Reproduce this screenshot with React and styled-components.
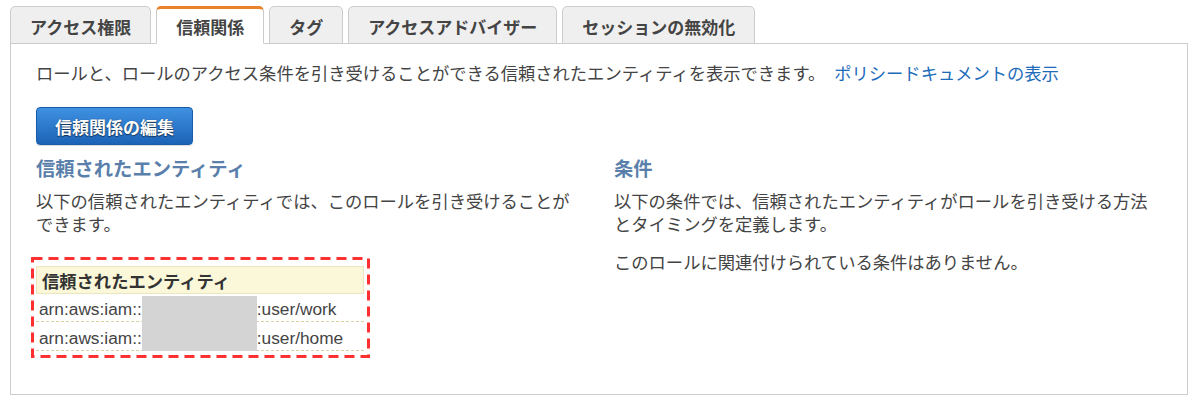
import React from "react";
import styled, { createGlobalStyle } from "styled-components";

const Global = createGlobalStyle`
  html, body { margin: 0; padding: 0; background: #fff; }
  body {
    font-family: "Liberation Sans", "Noto Sans CJK JP", sans-serif;
    color: #444;
  }
`;

const Page = styled.div`
  width: 1178px;
  padding: 6px 0 0 10px;
`;

const TabBar = styled.div`
  display: flex;
  gap: 5px;
  align-items: flex-end;
  position: relative;
  z-index: 1;
  margin-bottom: -1px;
`;

const Tab = styled.div`
  box-sizing: border-box;
  height: 38px;
  display: flex;
  align-items: center;
  padding: 0 19px;
  border: 1px solid #cccccc;
  border-radius: 5px 5px 0 0;
  font-size: 17px;
  font-weight: bold;
  color: #444;
  background: ${(p) => (p.$active ? "#fff" : "#efefef")};
  border-top: ${(p) => (p.$active ? "3px solid #e8832b" : "1px solid #cccccc")};
  border-bottom: ${(p) => (p.$active ? "1px solid #fff" : "1px solid #cccccc")};
  padding-top: ${(p) => (p.$active ? "0" : "2px")};
`;

const Panel = styled.div`
  box-sizing: border-box;
  height: 352px;
  border: 1px solid #cccccc;
  padding: 19px 25px 0 25px;
`;

const Intro = styled.div`
  font-size: 17.3px;
  line-height: 23px;
  color: #444;
`;

const Link = styled.a`
  color: #1d6cba;
  text-decoration: none;
  margin-left: 9px;
`;

const Button = styled.button`
  margin-top: 21px;
  box-sizing: border-box;
  height: 38px;
  padding: 0 18px;
  border: 1px solid #1a5ba9;
  border-radius: 4px;
  background: linear-gradient(#3f91e2, #1c63b6);
  color: #fff;
  font-family: "Liberation Sans", "Noto Sans CJK JP", sans-serif;
  font-size: 17px;
  font-weight: bold;
  text-shadow: 0 1px 1px rgba(0, 0, 0, 0.55), 0 0 1px rgba(0, 0, 0, 0.4);
  box-shadow: 0 1px 1px rgba(0, 0, 0, 0.15);
`;

const Columns = styled.div`
  display: grid;
  grid-template-columns: 1fr 1fr;
  margin-top: 13px;
`;

const Column = styled.div`
  padding: ${(p) => (p.$right ? "0 0 0 15px" : "0 15px 0 0")};
`;

const Heading = styled.div`
  font-size: 19.3px;
  line-height: 24px;
  font-weight: bold;
  color: #5a7fab;
`;

const Para = styled.p`
  margin: ${(p) => p.$mt || "9px"} 0 0 0;
  font-size: 17.3px;
  line-height: 23px;
  color: #444;
`;

const Annotation = styled.div`
  position: relative;
  box-sizing: border-box;
  width: 339px;
  height: 101px;
  margin: 20px 0 0 -5px;
  padding: 9px 6px 7px 5px;
`;

const DashFrame = styled.svg`
  position: absolute;
  left: 0;
  top: 0;
  pointer-events: none;
`;

const Table = styled.div`
  position: relative;
  width: 328px;
`;

const HeaderCell = styled.div`
  box-sizing: border-box;
  height: 28px;
  display: flex;
  align-items: center;
  padding-left: 5px;
  background: #fbf7d9;
  border: 1px solid #ebe6c2;
  font-size: 17.3px;
  font-weight: bold;
  color: #333;
`;

const Row = styled.div`
  box-sizing: border-box;
  height: ${(p) => p.$h || 28}px;
  display: flex;
  align-items: center;
  padding: 4px 0 0 3px;
  border-bottom: 1px dashed #d6d2a6;
  font-size: 17.3px;
  color: #444;
  white-space: nowrap;
`;

const Hidden = styled.span`
  display: inline-block;
  width: 115px;
`;

const Mask = styled.div`
  position: absolute;
  left: 106px;
  top: 30px;
  width: 115px;
  height: 55px;
  background: #d4d4d4;
`;

const tabs = [
  "アクセス権限",
  "信頼関係",
  "タグ",
  "アクセスアドバイザー",
  "セッションの無効化",
];

export default function App() {
  return (
    <>
      <Global />
      <Page>
        <TabBar>
          {tabs.map((t) => (
            <Tab key={t} $active={t === "信頼関係"}>
              {t}
            </Tab>
          ))}
        </TabBar>
        <Panel>
          <Intro>
            ロールと、ロールのアクセス条件を引き受けることができる信頼されたエンティティを表示できます。
            <Link href="#">ポリシードキュメントの表示</Link>
          </Intro>
          <Button>信頼関係の編集</Button>
          <Columns>
            <Column>
              <Heading>信頼されたエンティティ</Heading>
              <Para>
                以下の信頼されたエンティティでは、このロールを引き受けることができます。
              </Para>
              <Annotation>
                <DashFrame width="339" height="101">
                  <rect
                    x="1.5"
                    y="1.5"
                    width="336"
                    height="98"
                    fill="none"
                    stroke="#ff3030"
                    strokeWidth="3"
                    strokeDasharray="10 6"
                  />
                </DashFrame>
                <Table>
                  <HeaderCell>信頼されたエンティティ</HeaderCell>
                  <Row>
                    arn:aws:iam::<Hidden />:user/work
                  </Row>
                  <Row $h={29}>
                    arn:aws:iam::<Hidden />:user/home
                  </Row>
                  <Mask />
                </Table>
              </Annotation>
            </Column>
            <Column $right>
              <Heading>条件</Heading>
              <Para>
                以下の条件では、信頼されたエンティティがロールを引き受ける方法とタイミングを定義します。
              </Para>
              <Para $mt="15px">このロールに関連付けられている条件はありません。</Para>
            </Column>
          </Columns>
        </Panel>
      </Page>
    </>
  );
}
